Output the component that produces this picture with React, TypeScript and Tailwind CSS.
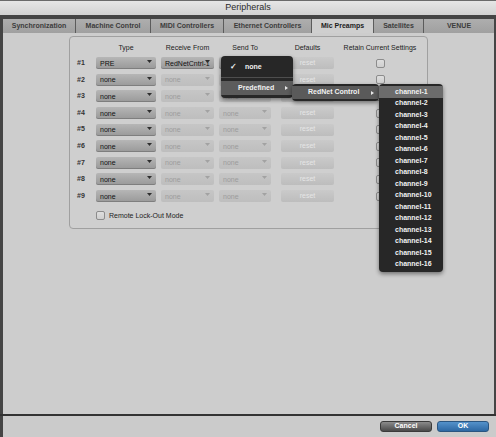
import React from 'react';

const tabs = [
  { name: 'Synchronization', w: 'w-[73px]' },
  { name: 'Machine Control', w: 'w-[75px]' },
  { name: 'MIDI Controllers', w: 'w-[73px]' },
  { name: 'Ethernet Controllers', w: 'w-[88px]' },
  { name: 'Mic Preamps', w: 'w-[62px]', active: true },
  { name: 'Satellites', w: 'w-[50px]' },
  { name: 'VENUE', w: 'w-[70px]' },
];

const rows = Array.from({ length: 9 }, (_, i) => ({
  n: i + 1,
  type: i === 0 ? 'PRE' : 'none',
  receive: i === 0 ? 'RedNetCntrl-1' : 'none',
  enabled: i === 0,
}));

const channels = Array.from({ length: 16 }, (_, i) => `channel-${i + 1}`);

const Arrow = ({ enabled }: { enabled: boolean }) => (
  <svg className="absolute right-[4px] top-[3px]" width="5" height="3" viewBox="0 0 5 3">
    <path d="M0 0H5L2.5 3Z" fill={enabled ? '#2e2e2e' : '#a2a2a2'} />
  </svg>
);

const Select = ({ text, enabled, className }: { text: string; enabled: boolean; className: string }) => (
  <div
    className={`${className} relative h-[12px] rounded-[2px] flex items-center pl-[4px] text-[7px] leading-none ${
      enabled
        ? 'bg-gradient-to-b from-[#b6b6b6] to-[#999999] text-[#111] shadow-[inset_0_-1px_0_rgba(0,0,0,0.18)]'
        : 'bg-gradient-to-b from-[#c6c6c6] to-[#bebebe] text-[#9c9c9c]'
    }`}
  >
    <span className="whitespace-nowrap">{text}</span>
    <Arrow enabled={enabled} />
  </div>
);

const Checkbox = () => (
  <div className="w-[9px] h-[9px] rounded-[2px] border border-[#8c8c8c] bg-gradient-to-b from-[#dedede] to-[#cfcfcf]" />
);

const SubArrow = () => (
  <svg width="3" height="4" viewBox="0 0 3 4">
    <path d="M0 0L3 2L0 4Z" fill="#e8e8e8" />
  </svg>
);

export default function App() {
  return (
    <div className="relative w-[496px] h-[437px] overflow-hidden flex flex-col bg-[#cdcdcd] font-['Liberation_Sans',Arial,sans-serif] select-none">
      {/* title bar */}
      <div className="h-[15px] border-t border-[#6a6a6a] bg-gradient-to-b from-[#e6e6e6] to-[#d2d2d2] flex items-center justify-center text-[9px] text-[#2b2b2b]">
        Peripherals
      </div>

      {/* frame */}
      <div className="flex-1 flex flex-col bg-[#454545] pl-[3px] pr-[2px] pt-[4px]">
        <div className="h-[14px] flex">
          {tabs.map((t, i) => (
            <div
              key={t.name}
              className={`${t.w} flex items-center justify-center text-[7px] font-bold whitespace-nowrap ${
                i < tabs.length - 1 ? 'border-r border-[#5c5c5c]' : ''
              } ${t.active ? 'bg-[#cfcfcf] text-[#1c1c1c]' : 'bg-gradient-to-b from-[#aeaeae] to-[#a0a0a0] text-[#3c3c3c]'}`}
            >
              {t.name}
            </div>
          ))}
        </div>

        <div className="flex-1 bg-[#cdcdcd] pt-[3px]">
          <div className="ml-[66px] w-[359px] h-[193px] border border-[#a0a0a0] rounded-[4px] bg-[#cfcfcf] pt-[5px] pl-[7px]">
            {/* headers */}
            <div className="h-[13px] flex items-center text-[7px] text-[#222]">
              <div className="w-[19px]" />
              <div className="w-[60px] text-center">Type</div>
              <div className="w-[53px] ml-[5px] text-center">Receive From</div>
              <div className="w-[52px] ml-[5px] text-center">Send To</div>
              <div className="w-[53px] ml-[10px] text-center">Defaults</div>
              <div className="w-[80px] ml-[6px] text-center whitespace-nowrap">Retain Current Settings</div>
            </div>

            {rows.map((r) => (
              <div key={r.n} className="h-[16.6px] flex items-center">
                <div className="w-[19px] text-[7px] font-bold text-[#333]">#{r.n}</div>
                <Select className="w-[60px]" text={r.type} enabled />
                <Select className="w-[53px] ml-[5px]" text={r.receive} enabled={r.enabled} />
                <Select className="w-[52px] ml-[5px]" text="none" enabled={r.enabled} />
                <div className="w-[53px] h-[12px] ml-[10px] rounded-[2px] bg-gradient-to-b from-[#cacaca] to-[#bdbdbd] flex items-center justify-center text-[7px] text-[#e6e6e6]">
                  reset
                </div>
                <div className="w-[80px] ml-[6px] flex justify-center">
                  <Checkbox />
                </div>
              </div>
            ))}

            <div className="mt-[7px] h-[9px] flex items-center">
              <div className="w-[19px]" />
              <Checkbox />
              <span className="ml-[4px] text-[7px] text-[#222]">Remote Lock-Out Mode</span>
            </div>
          </div>
        </div>
      </div>

      {/* separator */}
      <div className="h-[2px] bg-[#333]" />

      {/* bottom bar */}
      <div className="h-[21px] border-l-[3px] border-[#454545] bg-[#cbcbcb] flex items-center justify-end pr-[7px] gap-[5px]">
        <div className="w-[52px] h-[11px] rounded-[3px] border border-[#3a3a3a] bg-gradient-to-b from-[#8c8c8c] to-[#4a4a4a] flex items-center justify-center text-[7px] font-bold text-white">
          Cancel
        </div>
        <div className="w-[52px] h-[11px] rounded-[3px] border border-[#2a5580] bg-gradient-to-b from-[#5592cb] to-[#2d68a3] flex items-center justify-center text-[7px] font-bold text-white">
          OK
        </div>
      </div>

      {/* Send To popup */}
      <div className="absolute left-[221px] top-[56px] w-[72px] rounded-[4px] bg-[#272727] shadow-[0_2px_4px_rgba(0,0,0,0.45)] pt-[4px] pb-[3px] text-[7px] font-bold text-[#f2f2f2]">
        <div className="h-[14px] flex items-center">
          <span className="w-[24px] pl-[9px] text-[8px]">✓</span>
          <span>none</span>
        </div>
        <div className="mt-[3px] mb-[3px] h-[1px] bg-[#4e4e4e]" />
        <div className="h-[14px] flex items-center justify-between bg-[#5c5c5c] pl-[17px] pr-[5px]">
          <span>Predefined</span>
          <SubArrow />
        </div>
      </div>

      {/* Predefined submenu */}
      <div className="absolute left-[292px] top-[84px] w-[87px] rounded-[4px] bg-[#272727] shadow-[0_2px_4px_rgba(0,0,0,0.45)] py-[2px] text-[7px] font-bold text-[#f2f2f2]">
        <div className="h-[13px] flex items-center justify-between bg-[#5a5a5a] pl-[16px] pr-[5px]">
          <span>RedNet Control</span>
          <SubArrow />
        </div>
      </div>

      {/* RedNet Control submenu */}
      <div className="absolute left-[379px] top-[84px] w-[64px] rounded-[4px] bg-[#272727] shadow-[0_2px_4px_rgba(0,0,0,0.45)] py-[2px] text-[7px] font-bold text-[#f2f2f2]">
        {channels.map((c, i) => (
          <div key={c} className={`h-[11.5px] flex items-center pl-[16px] ${i === 0 ? 'bg-[#6c6c6c]' : ''}`}>
            {c}
          </div>
        ))}
      </div>
    </div>
  );
}
